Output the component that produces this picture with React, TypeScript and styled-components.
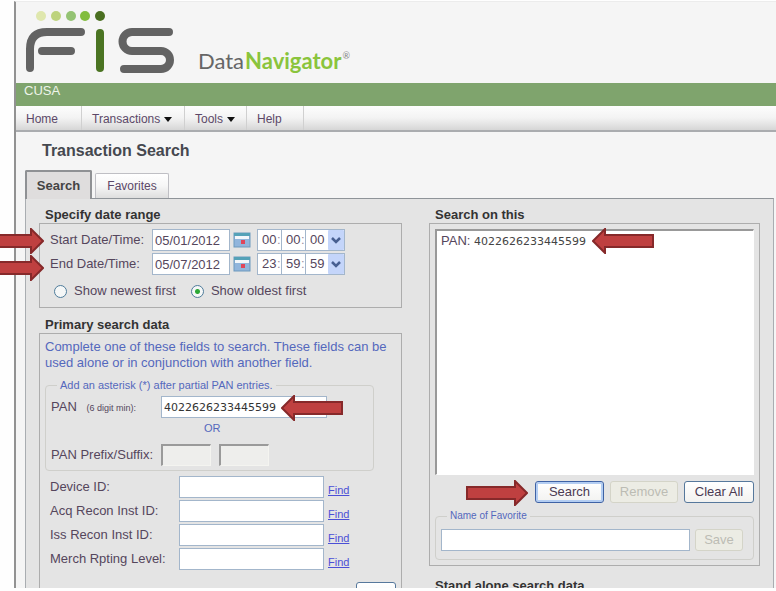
import React from "react";
import styled, { createGlobalStyle, css } from "styled-components";

const GlobalStyle = createGlobalStyle`
  * { box-sizing: border-box; }
  body {
    margin: 0;
    background: #fefefe;
    font-family: "Liberation Sans", Arial, sans-serif;
    font-size: 13px;
    line-height: 16px;
    color: #55465c;
  }
  input, button, select { font: inherit; color: inherit; margin: 0; }
  h1, h2, p, ul { margin: 0; padding: 0; }
`;

const Page = styled.div`
  height: calc(100vh - 3px);
  padding: 1px 0 0 14px;
  overflow: hidden;
`;

const Frame = styled.div`
  min-height: 100%;
  border-left: 2px solid #929292;
  border-top: 1px solid #ececec;
  background: #f5f5f5;
`;

const Header = styled.header`
  display: flex;
  align-items: flex-start;
  height: 81px;
  padding: 8px 0 0 9px;
`;

const FisLogo = styled.svg`
  width: 152px;
  height: 66px;
  flex: none;
`;

const ProductName = styled.div`
  display: flex;
  align-items: flex-start;
  gap: 1px;
  margin: 36px 0 0 21px;
  font-family: Lato, sans-serif;
  font-size: 22px;
  line-height: 30px;
  color: #666;

  b { color: #8ac43c; }
  sup { font-size: 9px; line-height: 20px; color: #888; }
`;

const OrgBar = styled.div`
  height: 23px;
  padding: 0 8px;
  background: #7fa46d;
  color: #eef4ea;
`;

const MenuBar = styled.nav`
  display: flex;
  height: 26px;
  border-bottom: 2px solid #aaacaf;
  background: linear-gradient(#fdfdfd, #f3f3f3 50%, #d6d6d6);
`;

const MenuItem = styled.button<{ $width: number }>`
  display: flex;
  align-items: center;
  gap: 4px;
  width: ${(p) => p.$width}px;
  padding: 2px 0 0 10px;
  border: 0;
  border-right: 1px solid #d0d0d0;
  background: none;
  color: #5c4868;
  font-size: 12px;
`;

const Caret = styled.span`
  border: 4px solid transparent;
  border-top: 5px solid #111;
  border-bottom: 0;
`;

const Title = styled.h1`
  padding: 9px 26px 0;
  font-size: 16px;
  line-height: 20px;
  color: #45484f;
`;

const Tabs = styled.div`
  display: flex;
  align-items: flex-end;
  gap: 3px;
  height: 37px;
  padding: 0 9px;
`;

const Tab = styled.button<{ $active?: boolean }>`
  height: 25px;
  width: 74px;
  padding: 0;
  border: 1px solid #bfbfc4;
  border-bottom: 0;
  border-radius: 2px 2px 0 0;
  background: linear-gradient(#fff, #f6f6f6 50%, #dedede);
  color: #5c4868;
  font-size: 12px;
  ${(p) =>
    p.$active &&
    css`
      position: relative;
      z-index: 1;
      width: 67px;
      height: 29px;
      margin-bottom: -1px;
      border: 2px solid #8f9194;
      border-bottom: 0;
      background: #dfdddd;
      color: #444;
      font-size: 13px;
      font-weight: bold;
    `}
`;

const Panel = styled.main`
  display: grid;
  grid-template-columns: minmax(0, 363fr) minmax(0, 331fr);
  column-gap: 27px;
  align-items: start;
  margin: 0 2px 0 9px;
  padding: 8px 13px;
  border: 1px solid #a9adb1;
  border-top-color: #8f9499;
  background: #e4e4e4;
`;

const Heading = styled.h2`
  padding-left: 6px;
  font-size: 13px;
  line-height: 16px;
  color: #333;
`;

const Box = styled.section<{ $gap?: number }>`
  padding: 5px;
  margin-bottom: ${(p) => p.$gap ?? 9}px;
  border: 1px solid #adadad;
`;

const Row = styled.div<{ $gap?: number }>`
  position: relative;
  display: flex;
  align-items: center;
  margin-bottom: 2px;
  gap: ${(p) => p.$gap ?? 0}px;
`;

const Label = styled.label<{ $width: number }>`
  width: ${(p) => p.$width}px;
  flex: none;
  padding-left: 5px;
  white-space: nowrap;

  small { margin-left: 6px; font-size: 9px; }
`;

const TextInput = styled.input<{ $width?: number; $kind?: "pan" | "sunken" }>`
  width: ${(p) => p.$width ?? 145}px;
  min-width: 0;
  height: 22px;
  padding: 0 2px;
  border: 1px solid #a3b6cb;
  background: #fff;
  ${(p) =>
    p.$kind === "pan" &&
    css`
      font-family: "DejaVu Sans", sans-serif;
      font-size: 11px;
      color: #333;
    `}
  ${(p) =>
    p.$kind === "sunken" &&
    css`
      border: 1px solid #f4f4f0;
      border-top: 2px solid #9a9a9a;
      border-left: 2px solid #9a9a9a;
      background: #eeeeec;
    `}
`;

const CalendarButton = styled.button`
  width: 18px;
  height: 16px;
  margin: 0 6px 0 3px;
  padding: 0;
  border: 0;
  background: none;

  svg { display: block; }
`;

const TimeGroup = styled.div`
  position: relative;
  display: flex;
  width: 88px;
  height: 22px;
  border: 1px solid #a3b6cb;
  background: #fff;

  > svg { position: absolute; right: 0; top: 0; pointer-events: none; }
`;

const TimeCell = styled.span`
  display: flex;
  align-items: center;
  width: 24px;
  border-right: 1px solid #a3b6cb;
  color: #998da0;

  input { width: 19px; padding: 0 0 0 4px; border: 0; background: none; color: #55465c; }
`;

const SecondsSelect = styled.select`
  appearance: none;
  flex: 1;
  width: 38px;
  padding: 0 0 0 4px;
  border: 0;
  border-radius: 0;
  background: none;
`;

const Radios = styled.div`
  display: flex;
  gap: 15px;
  padding: 6px 9px 3px;
`;

const RadioLabel = styled.label`
  display: flex;
  align-items: center;
  gap: 7px;
  white-space: nowrap;

  input {
    appearance: none;
    width: 13px;
    height: 13px;
    border: 1px solid #4f7c9b;
    border-radius: 50%;
    background: #f5f7f7;
  }
  input:checked {
    background: radial-gradient(circle, #2ca836 0 2px, #f5f7f7 3px);
  }
`;

const Hint = styled.p`
  padding-bottom: 6px;
  color: #5468bd;
`;

const Group = styled.fieldset<{ $pan?: boolean }>`
  min-width: 0;
  margin: 0;
  padding: 5px 5px 6px;
  border: 1px solid #cfcfcb;
  border-radius: 4px;
  ${(p) =>
    p.$pan &&
    css`
      width: 329px;
      max-width: 100%;
      margin-bottom: 5px;
      padding: 3px 0 2px;
    `}

  legend {
    margin-left: ${(p) => (p.$pan ? 11 : 6)}px;
    padding: 0 3px;
    font-size: ${(p) => (p.$pan ? 11 : 10)}px;
    line-height: 16px;
    color: #5468bd;
  }
`;

const Or = styled.div`
  padding: 0 0 8px 158px;
  font-size: 11px;
  line-height: 16px;
  color: #5468bd;
`;

const FindLink = styled.a`
  padding-top: 6px;
  font-size: 11px;
  color: #4b4fd6;
`;

const Button = styled.button<{ $width: number; $primary?: boolean }>`
  width: ${(p) => p.$width}px;
  height: 22px;
  padding: 0;
  border: 1px solid #56789c;
  border-radius: 3px;
  background: linear-gradient(#fff, #f2f2f0);
  color: #4b3a52;
  ${(p) => p.$primary && css`border-color: #3e62a5; box-shadow: inset 0 0 0 2px #b3cdf2;`}

  &:disabled {
    border-color: #d4d4c8;
    background: #ecece4;
    color: #bcbcb4;
  }
`;

const Actions = styled.div`
  position: relative;
  display: flex;
  justify-content: flex-end;
  gap: 6px;
  padding: 6px 0 5px;
`;

const AddRow = styled.div`
  display: flex;
  justify-content: flex-end;
  padding-top: 10px;
`;

const ResultList = styled.ul`
  position: relative;
  height: 246px;
  padding: 2px 4px;
  border: 1px solid #fff;
  border-top: 2px solid #999;
  border-left: 2px solid #999;
  background: #fff;
  list-style: none;

  span {
    font-family: "DejaVu Sans", sans-serif;
    font-size: 11px;
    color: #444;
  }
`;

const ArrowSvg = styled.svg<{ $left: number; $top: number }>`
  position: absolute;
  z-index: 2;
  left: ${(p) => p.$left}px;
  top: ${(p) => p.$top}px;
  pointer-events: none;
`;

function Arrow({ left, top, flip }: { left: number; top: number; flip?: boolean }) {
  const points = flip
    ? "1,13 13,1 13,7 61,7 61,19 13,19 13,25"
    : "61,13 49,1 49,7 1,7 1,19 49,19 49,25";
  return (
    <ArrowSvg $left={left} $top={top} width="62" height="26" aria-hidden="true">
      <polygon points={points} fill="#bf4040" stroke="#86292a" strokeWidth="2" />
    </ArrowSvg>
  );
}

function Logo() {
  return (
    <FisLogo viewBox="0 0 152 66" role="img" aria-label="FIS">
      <circle cx="16" cy="6" r="5" fill="#dfe7ad" />
      <circle cx="31" cy="6" r="5" fill="#bdd37d" />
      <circle cx="46" cy="6" r="5" fill="#94c373" />
      <circle cx="60" cy="6" r="5" fill="#82bd3e" />
      <circle cx="75" cy="6" r="5" fill="#4a6f20" />
      <g fill="none" stroke="#636363" strokeWidth="8" strokeLinecap="round">
        <path d="M5 58V39Q5 22 22 22H56M17 41H46" />
        <path d="M144 22H107A9.500 9.500 0 0 0 107 41H136A9 9 0 0 1 136 59H99" />
        <path d="M75 23V58" stroke="#4b7422" />
      </g>
    </FisLogo>
  );
}

interface DateRowProps {
  id: string;
  label: string;
  date: string;
  time: [string, string, string];
  arrowTop: number;
}

function DateRow({ id, label, date, time, arrowTop }: DateRowProps) {
  return (
    <Row>
      <Arrow left={-63} top={arrowTop} />
      <Label $width={107} htmlFor={id}>{label}</Label>
      <TextInput id={id} $width={78} defaultValue={date} />
      <CalendarButton type="button" aria-label={`Pick ${label}`}>
        <svg width="18" height="16" viewBox="0 0 18 16">
          <rect x="1" y="1" width="16" height="14" fill="#91b5dc" stroke="#6d99bd" />
          <rect x="1" y="1" width="16" height="3" fill="#55a2b8" />
          <rect x="2" y="4" width="14" height="3" fill="#f3f7fb" />
          <rect x="8" y="8" width="4" height="4" fill="#e0455a" />
        </svg>
      </CalendarButton>
      <TimeGroup>
        <TimeCell><input aria-label="Hours" defaultValue={time[0]} />:</TimeCell>
        <TimeCell><input aria-label="Minutes" defaultValue={time[1]} />:</TimeCell>
        <SecondsSelect aria-label="Seconds" defaultValue={time[2]}>
          <option>00</option>
          <option>59</option>
        </SecondsSelect>
        <svg width="16" height="20" viewBox="0 0 16 20">
          <rect width="16" height="20" rx="1" fill="#c4d5fa" />
          <path d="M4 8l4 4l4-4" fill="none" stroke="#475f91" strokeWidth="2.500" />
        </svg>
      </TimeGroup>
    </Row>
  );
}

const LOOKUPS = ["Device ID:", "Acq Recon Inst ID:", "Iss Recon Inst ID:", "Merch Rpting Level:"];

export default function App() {
  return (
    <Page>
      <GlobalStyle />
      <Frame>
        <Header>
          <Logo />
          <ProductName>
            <span>Data</span>
            <b>Navigator</b>
            <sup>®</sup>
          </ProductName>
        </Header>
        <OrgBar>CUSA</OrgBar>
        <MenuBar>
          <MenuItem $width={66}>Home</MenuItem>
          <MenuItem $width={103}>Transactions <Caret /></MenuItem>
          <MenuItem $width={62}>Tools <Caret /></MenuItem>
          <MenuItem $width={57}>Help</MenuItem>
        </MenuBar>
        <Title>Transaction Search</Title>
        <Tabs role="tablist">
          <Tab role="tab" aria-selected="true" $active>Search</Tab>
          <Tab role="tab" aria-selected="false">Favorites</Tab>
        </Tabs>
        <Panel>
          <div>
            <Heading>Specify date range</Heading>
            <Box>
              <DateRow id="start" label="Start Date/Time:" date="05/01/2012" time={["00", "00", "00"]} arrowTop={-1} />
              <DateRow id="end" label="End Date/Time:" date="05/07/2012" time={["23", "59", "59"]} arrowTop={2} />
              <Radios>
                <RadioLabel><input type="radio" name="order" />Show newest first</RadioLabel>
                <RadioLabel><input type="radio" name="order" defaultChecked />Show oldest first</RadioLabel>
              </Radios>
            </Box>
            <Heading>Primary search data</Heading>
            <Box>
              <Hint>Complete one of these fields to search. These fields can be used alone or in conjunction with another field.</Hint>
              <Group $pan>
                <legend>Add an asterisk (*) after partial PAN entries.</legend>
                <Row>
                  <Label $width={115} htmlFor="pan">PAN <small>(6 digit min):</small></Label>
                  <TextInput id="pan" $width={166} $kind="pan" defaultValue="4022626233445599" />
                  <Arrow left={235} top={-1} flip />
                </Row>
                <Or>OR</Or>
                <Row $gap={8}>
                  <Label $width={107} htmlFor="prefix">PAN Prefix/Suffix:</Label>
                  <TextInput id="prefix" $width={50} $kind="sunken" />
                  <TextInput aria-label="PAN suffix" $width={50} $kind="sunken" />
                </Row>
              </Group>
              {LOOKUPS.map((label, i) => (
                <Row key={label} $gap={4}>
                  <Label $width={130} htmlFor={`lookup-${i}`}>{label}</Label>
                  <TextInput id={`lookup-${i}`} />
                  <FindLink href="#">Find</FindLink>
                </Row>
              ))}
              <AddRow><Button $width={40}>Add</Button></AddRow>
            </Box>
          </div>
          <div>
            <Heading>Search on this</Heading>
            <Box $gap={12}>
              <ResultList>
                <li>PAN: <span>4022626233445599</span></li>
                <Arrow left={155} top={-3} flip />
              </ResultList>
              <Actions>
                <Arrow left={31} top={5} />
                <Button $width={69} $primary>Search</Button>
                <Button $width={68} disabled>Remove</Button>
                <Button $width={70}>Clear All</Button>
              </Actions>
              <Group>
                <legend>Name of Favorite</legend>
                <Row $gap={5}>
                  <TextInput aria-label="Name of Favorite" $width={249} />
                  <Button $width={48} disabled>Save</Button>
                </Row>
              </Group>
            </Box>
            <Heading>Stand alone search data</Heading>
          </div>
        </Panel>
      </Frame>
    </Page>
  );
}
